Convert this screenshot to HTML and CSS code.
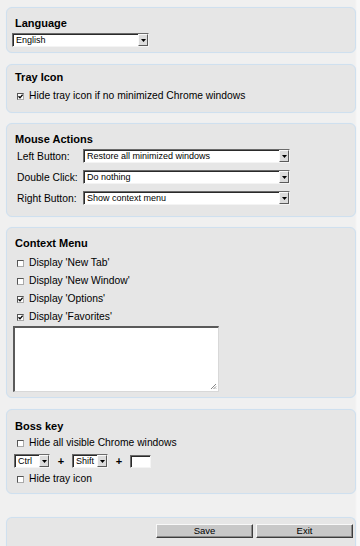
FILE: index.html
```html
<!DOCTYPE html>
<html lang="en">

<head>
  <meta charset="UTF-8" />
  <meta name="viewport" content="width=device-width, initial-scale=1.0" />
  <title>Options</title>
  <link rel="stylesheet" href="styles.css">
</head>

<body>
  <div class="page">
    <!-- Language -->
    <div class="panel panel-lang">
      <p class="panel-title">Language</p>
      <div class="select select-lang">
        <span class="select-text">English</span>
        <span class="select-arrow"><svg width="5" height="3" viewBox="0 0 5 3"><path d="M0 0H5L2.5 3Z" fill="#000" /></svg></span>
      </div>
    </div>

    <!-- Tray icon -->
    <div class="panel panel-tray">
      <p class="panel-title">Tray Icon</p>
      <div class="check-row">
        <span class="check"><svg width="5" height="5" viewBox="0 0 5 5"><path d="M0.5 2.2L2 3.8L4.6 0.6" stroke="#000" stroke-width="1.3" fill="none" /></svg></span>
        <span class="check-label">Hide tray icon if no minimized Chrome windows</span>
      </div>
    </div>

    <!-- Mouse actions -->
    <div class="panel panel-mouse">
      <p class="panel-title">Mouse Actions</p>
      <div class="mouse-rows">
        <div class="mouse-row">
          <span class="mouse-label">Left Button:</span>
          <div class="select select-wide">
            <span class="select-text">Restore all minimized windows</span>
            <span class="select-arrow"><svg width="5" height="3" viewBox="0 0 5 3"><path d="M0 0H5L2.5 3Z" fill="#000" /></svg></span>
          </div>
        </div>
        <div class="mouse-row">
          <span class="mouse-label">Double Click:</span>
          <div class="select select-wide">
            <span class="select-text">Do nothing</span>
            <span class="select-arrow"><svg width="5" height="3" viewBox="0 0 5 3"><path d="M0 0H5L2.5 3Z" fill="#000" /></svg></span>
          </div>
        </div>
        <div class="mouse-row">
          <span class="mouse-label">Right Button:</span>
          <div class="select select-wide">
            <span class="select-text">Show context menu</span>
            <span class="select-arrow"><svg width="5" height="3" viewBox="0 0 5 3"><path d="M0 0H5L2.5 3Z" fill="#000" /></svg></span>
          </div>
        </div>
      </div>
    </div>

    <!-- Context menu -->
    <div class="panel panel-context">
      <p class="panel-title">Context Menu</p>
      <div class="check-list">
        <div class="check-row">
          <span class="check"></span>
          <span class="check-label">Display 'New Tab'</span>
        </div>
        <div class="check-row">
          <span class="check"></span>
          <span class="check-label">Display 'New Window'</span>
        </div>
        <div class="check-row">
          <span class="check"><svg width="5" height="5" viewBox="0 0 5 5"><path d="M0.5 2.2L2 3.8L4.6 0.6" stroke="#000" stroke-width="1.3" fill="none" /></svg></span>
          <span class="check-label">Display 'Options'</span>
        </div>
        <div class="check-row">
          <span class="check"><svg width="5" height="5" viewBox="0 0 5 5"><path d="M0.5 2.2L2 3.8L4.6 0.6" stroke="#000" stroke-width="1.3" fill="none" /></svg></span>
          <span class="check-label">Display 'Favorites'</span>
        </div>
      </div>
      <div class="textarea">
        <svg class="grip" width="7" height="7" viewBox="0 0 7 7"><path d="M6 1L1 6M6 3.5L3.5 6M6 5.5L5.5 6" stroke="#888" stroke-width="1" /></svg>
      </div>
    </div>

    <!-- Boss key -->
    <div class="panel panel-boss">
      <p class="panel-title">Boss key</p>
      <div class="check-row">
        <span class="check"></span>
        <span class="check-label">Hide all visible Chrome windows</span>
      </div>
      <div class="key-row">
        <div class="select select-key">
          <span class="select-text">Ctrl</span>
          <span class="select-arrow"><svg width="5" height="3" viewBox="0 0 5 3"><path d="M0 0H5L2.5 3Z" fill="#000" /></svg></span>
        </div>
        <span class="plus">+</span>
        <div class="select select-key">
          <span class="select-text">Shift</span>
          <span class="select-arrow"><svg width="5" height="3" viewBox="0 0 5 3"><path d="M0 0H5L2.5 3Z" fill="#000" /></svg></span>
        </div>
        <span class="plus">+</span>
        <div class="key-input"></div>
      </div>
      <div class="check-row">
        <span class="check"></span>
        <span class="check-label">Hide tray icon</span>
      </div>
    </div>

    <!-- Buttons -->
    <div class="panel panel-buttons">
      <button class="btn">Save</button>
      <button class="btn">Exit</button>
    </div>
  </div>
</body>

</html>
```
FILE: styles.css
```css
/* Global Reset */
p {
  margin: 0;
}

body {
  margin: 0;
  height: 546px;
  overflow: hidden;
  background-color: #f0f0f0;
  font-family: "Liberation Sans", Arial, sans-serif;
  color: #000;
}

/* Page */
.page {
  display: flex;
  flex-direction: column;
  padding: 7px 4px 0 6px;
  background: linear-gradient(to right, #f0f0f0 355px, #f8f8f8 357px);
  height: 100%;
  box-sizing: border-box;
}

/* Panels */
.panel {
  box-sizing: border-box;
  flex-shrink: 0;
  background-color: #e6e6e6;
  border: 1px solid #cfe0ef;
  border-radius: 6px;
  padding: 8px 5px 5px 5px;
  box-shadow: 0 0 1px #dce8f3;
}

.panel-title {
  font-size: 11px;
  font-weight: bold;
  line-height: 13px;
  margin-left: 3px;
}

.panel-lang {
  padding-top: 9px;
  height: 46px;
}

.panel-tray {
  margin-top: 11px;
  padding-top: 6px;
  height: 49px;
}

.panel-mouse {
  margin-top: 10px;
  height: 94px;
  padding-top: 9px;
}

.panel-context {
  margin-top: 10px;
  height: 171px;
  padding-top: 9px;
}

.panel-boss {
  margin-top: 11px;
  height: 85px;
  padding-top: 10px;
}

.panel-buttons {
  margin-top: 23px;
  height: 40px;
  padding: 6px 2px 0 0;
  display: flex;
  justify-content: flex-end;
  gap: 3px;
  border-bottom: none;
  border-radius: 6px 6px 0 0;
}

/* Selects */
.select {
  display: flex;
  align-items: stretch;
  height: 12px;
  background-color: #fff;
  border-top: 1px solid #6a6a6a;
  border-left: 1px solid #6a6a6a;
  border-right: 1px solid #f4f4f4;
  border-bottom: 1px solid #f4f4f4;
  box-shadow: inset 1px 1px 0 #2a2a2a;
}

.select-text {
  flex: 1;
  font-size: 9px;
  line-height: 12px;
  padding-left: 3px;
  white-space: nowrap;
  overflow: hidden;
}

.select-arrow {
  width: 10px;
  display: flex;
  align-items: center;
  justify-content: center;
  background-color: #dcdcdc;
  border-top: 1px solid #fafafa;
  border-left: 1px solid #fafafa;
  border-right: 1px solid #5a5a5a;
  border-bottom: 1px solid #5a5a5a;
  box-sizing: border-box;
}

.select-lang {
  width: 135px;
  margin-top: 3px;
}

.select-wide {
  width: 205px;
}

.select-key {
  width: 34px;
}

/* Checkboxes */
.check-row {
  display: flex;
  align-items: center;
  gap: 5px;
  margin-left: 5px;
  height: 14px;
}

.check {
  width: 7px;
  height: 7px;
  box-sizing: border-box;
  background-color: #fff;
  border-top: 1px solid #555;
  border-left: 1px solid #555;
  border-right: 1px solid #aaa;
  border-bottom: 1px solid #aaa;
  display: flex;
  align-items: center;
  justify-content: center;
}

.check svg {
  display: block;
}

.check-label {
  font-size: 10.3px;
  line-height: 14px;
  white-space: nowrap;
}

.panel-tray .check-row {
  margin-top: 5px;
}

/* Mouse rows */
.mouse-rows {
  display: flex;
  flex-direction: column;
  gap: 7px;
  margin-top: 3px;
}

.mouse-row {
  display: flex;
  align-items: center;
  height: 14px;
  margin-left: 5px;
}

.mouse-label {
  width: 66px;
  font-size: 10.3px;
  white-space: nowrap;
}

/* Context menu */
.check-list {
  display: flex;
  flex-direction: column;
  gap: 4px;
  margin-top: 6px;
}

.textarea {
  position: relative;
  width: 203px;
  height: 63px;
  margin: 2px 0 0 1px;
  background-color: #fff;
  border-top: 2px solid #5a5a5a;
  border-left: 2px solid #5a5a5a;
  border-right: 1px solid #d8d8d8;
  border-bottom: 1px solid #d8d8d8;
}

.grip {
  position: absolute;
  right: 1px;
  bottom: 1px;
}

/* Boss key */
.panel-boss .check-row {
  margin-top: 3px;
}

.key-row {
  display: flex;
  align-items: center;
  margin: 4px 0 4px 2px;
}

.plus {
  font-size: 11px;
  font-weight: bold;
  width: 22px;
  text-align: center;
}

.key-input {
  width: 19px;
  height: 11px;
  background-color: #fff;
  border-top: 1px solid #6a6a6a;
  border-left: 1px solid #6a6a6a;
  border-right: 1px solid #f4f4f4;
  border-bottom: 1px solid #f4f4f4;
  box-shadow: inset 1px 1px 0 #2a2a2a;
}

/* Buttons */
.btn {
  width: 97px;
  height: 14px;
  padding: 0;
  font-family: "Liberation Sans", Arial, sans-serif;
  font-size: 9.5px;
  line-height: 12px;
  color: #000;
  background-color: #c8c8c8;
  border-top: 1px solid #f8f8f8;
  border-left: 1px solid #f8f8f8;
  border-right: 1px solid #3c3c3c;
  border-bottom: 1px solid #3c3c3c;
  box-shadow: inset -1px -1px 0 #8a8a8a;
}
```
